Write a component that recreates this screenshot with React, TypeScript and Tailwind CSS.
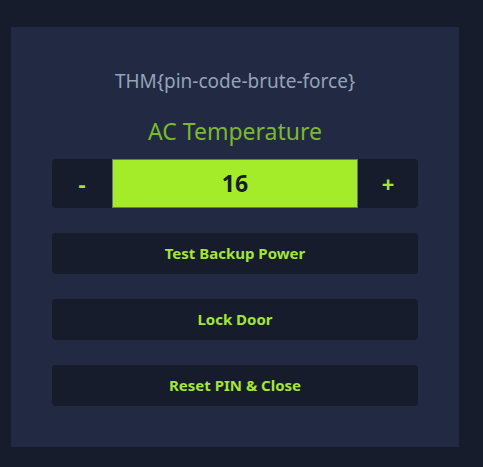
export default function App() {
	return (
		<div
			className="min-h-[467px] w-[483px] bg-[#161c2b] pt-[27px] pb-[20px]"
			style={{ fontFamily: '"Noto Sans", "Open Sans", sans-serif' }}
		>
			<div className="ml-[11px] flex h-[420px] w-[448px] flex-col items-center bg-[#212a42] px-[41px] pt-[40px]">
				<p className="text-[19px] leading-[28px] text-[#94a3b8]">THM{"{pin-code-brute-force}"}</p>
				<h2 className="mt-[20px] text-[23px] leading-[32px] text-[#7cb82f]">AC Temperature</h2>
				<div className="mt-[12px] flex h-[49px] w-full">
					<button className="w-[60px] rounded-l-[4px] bg-[#161c2b] text-[22px] font-bold text-[#a3e635]">-</button>
					<div className="flex flex-1 items-center justify-center border border-[#6b7280] bg-[#a4eb2a] text-[23px] font-bold text-[#161c2b]">
						16
					</div>
					<button className="w-[60px] rounded-r-[4px] bg-[#161c2b] text-[22px] font-bold text-[#a3e635]">+</button>
				</div>
				<div className="mt-[25px] flex w-full flex-col gap-[25px]">
					{["Test Backup Power", "Lock Door", "Reset PIN & Close"].map((label) => (
						<button
							key={label}
							className="h-[41px] w-full rounded-[4px] bg-[#161c2b] text-[15px] font-bold text-[#a3e635]"
						>
							{label}
						</button>
					))}
				</div>
			</div>
		</div>
	);
}
